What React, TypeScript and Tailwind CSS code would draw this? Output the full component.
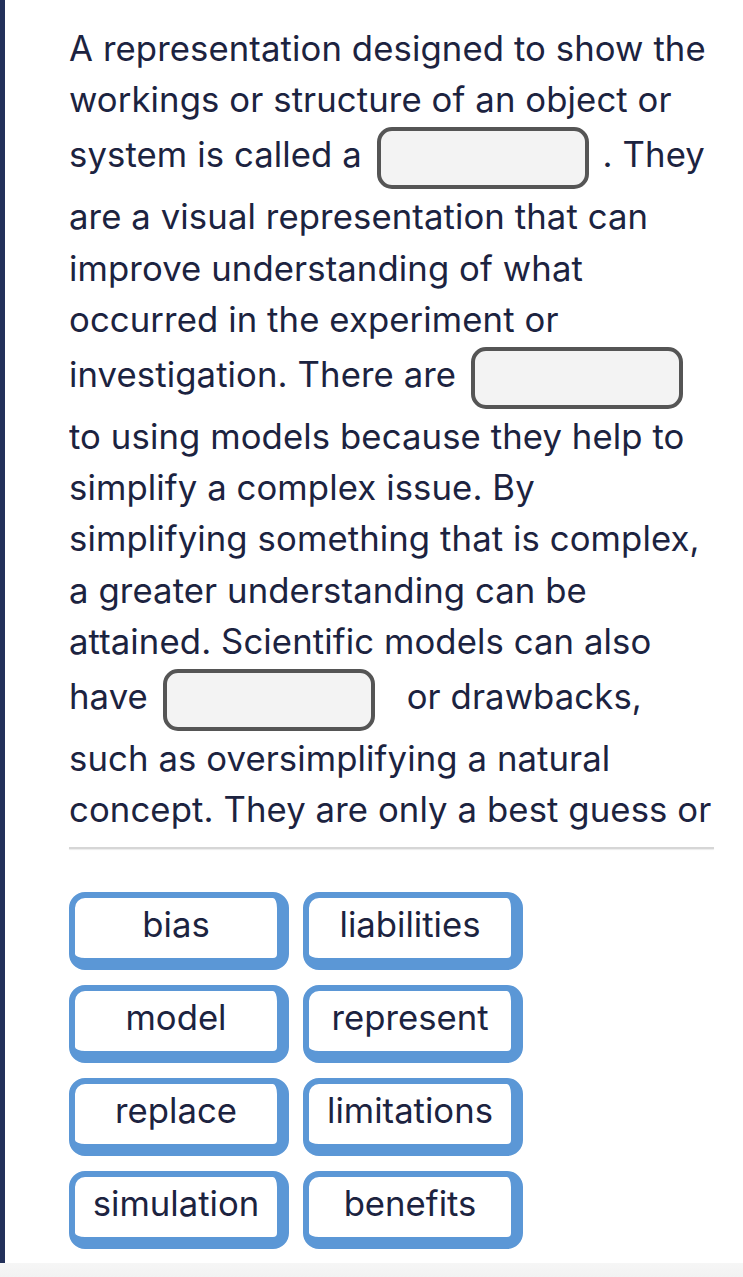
import React from 'react'

const WORDS = ['bias', 'liabilities', 'model', 'represent', 'replace', 'limitations', 'simulation', 'benefits']

function Blank({ gap = 'mr-[12px]' }: { gap?: string }) {
  return (
    <span
      className={`ml-[5px] my-[2px] inline-block h-[62px] w-[212px] rounded-[15px] border-[4px] border-[#555555] bg-[#f3f3f3] align-middle ${gap}`}
    />
  )
}

function WordChip({ word }: { word: string }) {
  return (
    <button className="flex h-[78px] w-[220px] items-center justify-center rounded-[16px] border-t-[6px] border-r-[12px] border-b-[12px] border-l-[6px] border-[#5b97d6] bg-white pb-[8px] text-[34.7px] text-[#1c2340]">
      {word}
    </button>
  )
}

export default function App() {
  return (
    <div className="flex h-[1277px] w-[743px] flex-col bg-white" style={{ fontFamily: 'Inter, "Noto Sans", sans-serif' }}>
      <div className="flex flex-1">
        {/* Left accent */}
        <div className="w-[6px] bg-[#22305a]" />

        <div className="flex flex-1 flex-col pl-[64px] pr-[29px]">
          {/* Passage */}
          <div className="h-[840px] overflow-hidden pt-[23px] text-[34.7px] leading-[51.2px] tracking-[0.1px] text-[#1c2340]">
            <p>
              A representation designed to show the workings or structure of an object or system is called a{' '}
              <Blank gap="mr-[4px]" /> . They are a visual representation that can improve understanding of what
              occurred in the experiment or investigation. There are <Blank /> to using models because they help to
              simplify a complex issue. By simplifying something that is complex, a greater understanding can be
              attained. Scientific models can also have <Blank gap="mr-[22px]" /> or drawbacks, such as oversimplifying
              a natural concept. They are only a best guess or approximation of how something works in nature and
              cannot fully replace the real thing.
            </p>
          </div>
          <div className="mt-[7px] h-[2px] w-[645px] bg-[#d6d6d6] shadow-[0_1px_1px_rgba(0,0,0,0.08)]" />

          {/* Word bank */}
          <div className="mt-[43px] grid grid-cols-[220px_220px] gap-x-[14px] gap-y-[15px]">
            {WORDS.map(w => (
              <WordChip key={w} word={w} />
            ))}
          </div>
        </div>
      </div>
      <div className="h-[14px] bg-gradient-to-b from-[#f6f6f6] to-[#f2f2f2]" />
    </div>
  )
}
